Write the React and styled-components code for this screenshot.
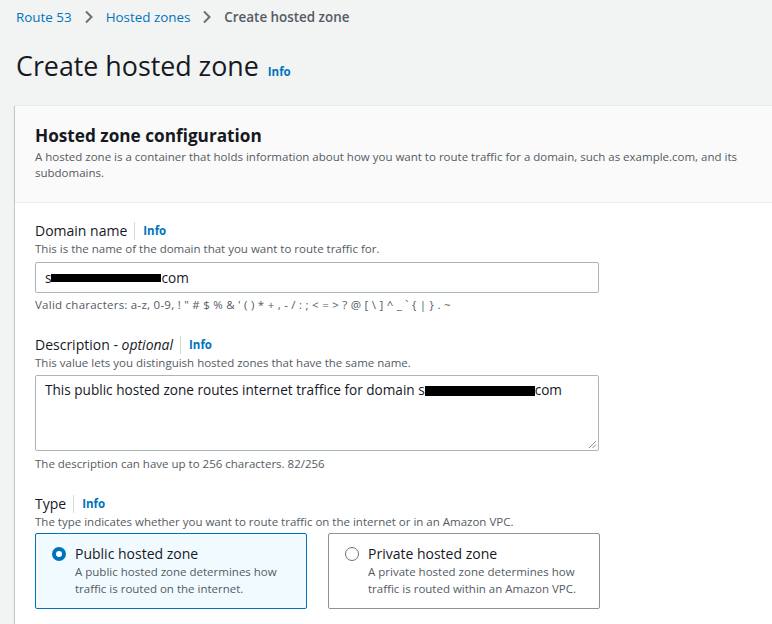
import React from 'react';
import styled, { createGlobalStyle } from 'styled-components';

const GlobalStyle = createGlobalStyle`
  body {
    margin: 0;
    background: #f2f3f3;
    font-family: "Open Sans", "Noto Sans", sans-serif;
    color: #16191f;
  }
`;

const Page = styled.div`
  padding: 0 0 0 16px;
  overflow: hidden;
  height: 624px;
`;

const Breadcrumbs = styled.nav`
  display: flex;
  align-items: center;
  height: 34px;
  font-size: 13.4px;
`;

const Crumb = styled.span`
  color: ${p => (p.current ? '#545b64' : '#0073bb')};
  font-weight: ${p => (p.current ? 600 : 400)};
`;

const Chevron = styled.span`
  display: inline-flex;
  margin: 0 12px;
  color: #687078;
`;

const TitleRow = styled.div`
  display: flex;
  align-items: baseline;
  gap: 9px;
  margin-top: 14px;
`;

const Title = styled.h1`
  margin: 0;
  font-size: 26.8px;
  font-weight: 400;
  line-height: 36px;
  color: #16191f;
`;

const Info = styled.span`
  color: #0073bb;
  font-size: 11.5px;
  font-weight: 700;
`;

const Card = styled.section`
  margin-top: 21px;
  margin-left: -1px;
  background: #fff;
  box-shadow: 0 1px 1px rgba(0, 28, 36, 0.3), 1px 1px 1px rgba(0, 28, 36, 0.15), -1px 1px 1px rgba(0, 28, 36, 0.15);
  border-top: 1px solid #eaeded;
`;

const CardHeader = styled.header`
  background: #fafafa;
  border-bottom: 1px solid #eaeded;
  padding: 18px 20px 21px 20px;
`;

const CardTitle = styled.h2`
  margin: 0;
  font-size: 17.2px;
  font-weight: 700;
  line-height: 23px;
`;

const CardDesc = styled.p`
  margin: 2px 0 0;
  font-size: 11.5px;
  line-height: 16px;
  color: #545b64;
  max-width: 730px;
`;

const CardBody = styled.div`
  padding: 18px 20px 20px 20px;
  display: flex;
  flex-direction: column;
  gap: 22px;
`;

const Field = styled.div`
  display: flex;
  flex-direction: column;
`;

const LabelRow = styled.div`
  display: flex;
  align-items: center;
  font-size: 14px;
  line-height: 20px;
`;

const Label = styled.label`
  color: #16191f;
  em {
    font-style: italic;
  }
`;

const Divider = styled.span`
  width: 1px;
  height: 18px;
  background: #d5dbdb;
  margin: 0 8px 0 7px;
`;

const Help = styled.div`
  font-size: 11.5px;
  line-height: 16px;
  color: #545b64;
  margin-top: ${p => p.top || 0}px;
  letter-spacing: ${p => p.spaced ? '0.25px' : 'normal'};
`;

const Input = styled.div`
  margin-top: 5px;
  width: 564px;
  height: 31px;
  box-sizing: border-box;
  border: 1px solid #aab7b8;
  border-radius: 2px;
  padding: 0 9px;
  font-size: 13.6px;
  display: flex;
  align-items: center;
  background: #fff;
`;

const TextArea = styled.div`
  margin-top: 4px;
  width: 564px;
  height: 76px;
  box-sizing: border-box;
  border: 1px solid #aab7b8;
  border-radius: 2px;
  padding: 4px 9px;
  font-size: 13.6px;
  line-height: 20px;
  position: relative;
  background: #fff;
`;

const Grip = styled.svg`
  position: absolute;
  right: 1px;
  bottom: 1px;
`;

const Redacted = styled.span`
  display: inline-block;
  width: ${p => p.w}px;
  height: ${p => p.h}px;
  background: #000;
  vertical-align: middle;
`;

const Choices = styled.div`
  display: flex;
  gap: 21px;
  margin-top: 3px;
`;

const Choice = styled.div`
  width: 272px;
  height: 76px;
  box-sizing: border-box;
  border: 1px solid ${p => (p.selected ? '#0073bb' : '#879596')};
  background: ${p => (p.selected ? '#f1faff' : '#fff')};
  border-radius: 2px;
  padding: 10px 14px 0 16px;
  display: flex;
  gap: 9px;
`;

const Radio = styled.span`
  width: 14px;
  height: 14px;
  margin-top: 3px;
  flex: none;
  box-sizing: border-box;
  border-radius: 50%;
  border: ${p => (p.checked ? '4px solid #0073bb' : '1.5px solid #687078')};
  background: #fff;
`;

const ChoiceText = styled.div`
  display: flex;
  flex-direction: column;
`;

const ChoiceTitle = styled.span`
  font-size: 14px;
  line-height: 19px;
`;

const ChoiceDesc = styled.span`
  font-size: 11.5px;
  line-height: 17px;
  color: #545b64;
`;

const ChevronIcon = () => (
  <svg width="10" height="14" viewBox="0 0 10 14">
    <path d="M2 1.5 L7.5 7 L2 12.5" fill="none" stroke="currentColor" strokeWidth="2" />
  </svg>
);

export default function App() {
  return (
    <>
      <GlobalStyle />
      <Page>
        <Breadcrumbs>
          <Crumb>Route 53</Crumb>
          <Chevron><ChevronIcon /></Chevron>
          <Crumb>Hosted zones</Crumb>
          <Chevron><ChevronIcon /></Chevron>
          <Crumb current>Create hosted zone</Crumb>
        </Breadcrumbs>
        <TitleRow>
          <Title>Create hosted zone</Title>
          <Info>Info</Info>
        </TitleRow>
        <Card>
          <CardHeader>
            <CardTitle>Hosted zone configuration</CardTitle>
            <CardDesc>
              A hosted zone is a container that holds information about how you want to route traffic for a domain, such as example.com, and its subdomains.
            </CardDesc>
          </CardHeader>
          <CardBody>
            <Field>
              <LabelRow>
                <Label>Domain name</Label>
                <Divider />
                <Info>Info</Info>
              </LabelRow>
              <Help>This is the name of the domain that you want to route traffic for.</Help>
              <Input>
                s<Redacted w={110} h={8} />com
              </Input>
              <Help top={4} spaced>Valid characters: a-z, 0-9, ! " # $ % &amp; ' ( ) * + , - / : ; &lt; = &gt; ? @ [ \ ] ^ _ ` {'{'} | {'}'} . ~</Help>
            </Field>
            <Field>
              <LabelRow>
                <Label>Description - <em>optional</em></Label>
                <Divider />
                <Info>Info</Info>
              </LabelRow>
              <Help>This value lets you distinguish hosted zones that have the same name.</Help>
              <TextArea>
                This public hosted zone routes internet traffice for domain s<Redacted w={110} h={10} />com
                <Grip width="9" height="9" viewBox="0 0 9 9">
                  <path d="M8 1 L1 8 M8 4.5 L4.5 8" stroke="#879596" strokeWidth="1" />
                </Grip>
              </TextArea>
              <Help top={5}>The description can have up to 256 characters. 82/256</Help>
            </Field>
            <Field>
              <LabelRow>
                <Label>Type</Label>
                <Divider />
                <Info>Info</Info>
              </LabelRow>
              <Help>The type indicates whether you want to route traffic on the internet or in an Amazon VPC.</Help>
              <Choices>
                <Choice selected>
                  <Radio checked />
                  <ChoiceText>
                    <ChoiceTitle>Public hosted zone</ChoiceTitle>
                    <ChoiceDesc>A public hosted zone determines how traffic is routed on the internet.</ChoiceDesc>
                  </ChoiceText>
                </Choice>
                <Choice>
                  <Radio />
                  <ChoiceText>
                    <ChoiceTitle>Private hosted zone</ChoiceTitle>
                    <ChoiceDesc>A private hosted zone determines how traffic is routed within an Amazon VPC.</ChoiceDesc>
                  </ChoiceText>
                </Choice>
              </Choices>
            </Field>
          </CardBody>
        </Card>
      </Page>
    </>
  );
}
